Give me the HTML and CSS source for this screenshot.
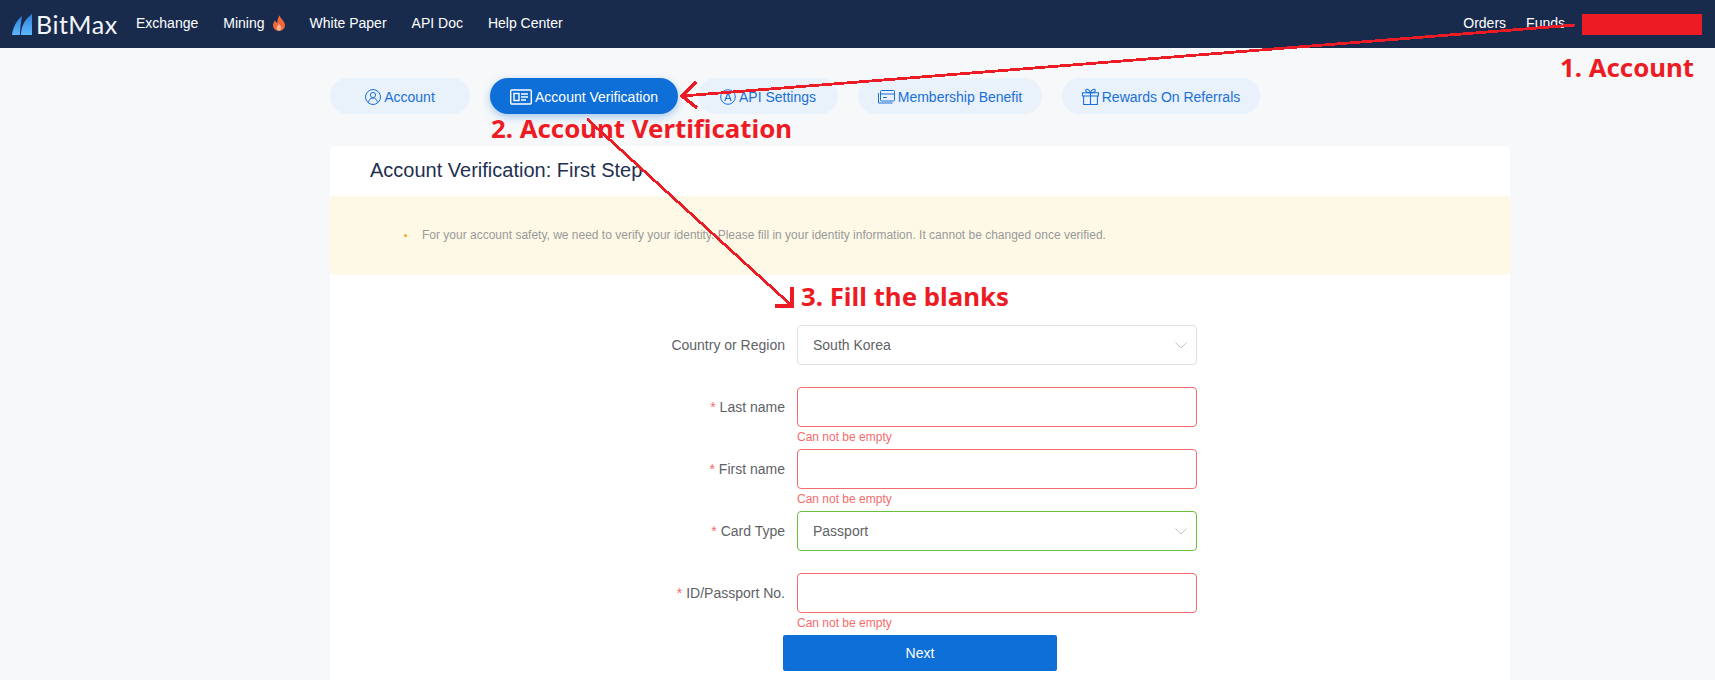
FILE: index.html
```html
<!DOCTYPE html>
<html lang="en">
<head>
<meta charset="utf-8">
<title>BitMax - Account Verification</title>
<link rel="stylesheet" href="styles.css">
</head>
<body>
<header class="topbar">
  <a class="logo">
    <svg class="logo-mark" width="20" height="21" viewBox="0 0 20 21">
      <defs>
        <linearGradient id="sail" x1="0" y1="0" x2="0" y2="1">
          <stop offset="0" stop-color="#2f80d8"/>
          <stop offset="1" stop-color="#5cb8ff"/>
        </linearGradient>
      </defs>
      <path d="M0 21C1 13 5 6 10 2C9 8 8 14 8 21Z" fill="url(#sail)"/>
      <path d="M9 21C9 12 13 5 20 0V21Z" fill="url(#sail)"/>
    </svg>
    <span class="logo-text">BitMax</span>
  </a>
  <nav class="nav">
    <a>Exchange</a>
    <a class="nav-fire">Mining
      <svg width="12" height="16" viewBox="0 0 13 17">
        <path d="M7 0C8 4 13 6 13 11C13 14.500 10 17 6.500 17C3 17 0 14.500 0 11C0 8.500 1.500 7 2.500 5.500C3 7 3.500 8 4.500 8.500C5 5.500 5 3 7 0Z" fill="#f0683c"/>
        <path d="M6.500 9C7 11 9 12 9 14C9 15.500 8 17 6.500 17C5 17 4 15.500 4 14C4 12 6 11 6.500 9Z" fill="#fbb58e"/>
      </svg>
    </a>
    <a>White Paper</a>
    <a>API Doc</a>
    <a>Help Center</a>
  </nav>
  <div class="nav-right">
    <a>Orders</a>
    <a class="funds">Funds</a>
    <span class="redacted"></span>
  </div>
</header>

<main class="page">
  <div class="tabs">
    <a class="tab tab-account">
      <svg width="16" height="16" viewBox="0 0 16 16" fill="none" stroke="currentColor"><circle cx="8" cy="8" r="7.500"/><circle cx="8" cy="6" r="2.600"/><path d="M3.500 13.500C4 10.500 5.500 9 8 9C10.500 9 12 10.500 12.500 13.500"/></svg>
      Account
    </a>
    <a class="tab tab-active tab-verify">
      <svg class="id-icon" width="22" height="16" viewBox="0 0 22 16" fill="none" stroke="currentColor" stroke-width="1.400"><rect x="0.700" y="1" width="20.600" height="14" rx="1"/><rect x="4" y="4.500" width="5" height="7"/><path d="M11 5H18M11 8H18M11 11H16"/></svg>
      Account Verification
    </a>
    <a class="tab tab-api">
      <svg width="16" height="16" viewBox="0 0 16 16" fill="none" stroke="currentColor"><circle cx="8" cy="8" r="7.300"/><path d="M4.800 12L8 3.800L11.200 12M5.900 9.500H10.100" stroke-width="1.200"/></svg>
      API Settings
    </a>
    <a class="tab tab-member">
      <svg width="17" height="14" viewBox="0 0 17 14" fill="none" stroke="currentColor"><rect x="2.500" y="0.500" width="14" height="10.500" rx="1"/><path d="M0.500 3V13H14.500M2.500 4H16.500M5 7.500H9"/></svg>
      Membership Benefit
    </a>
    <a class="tab tab-reward">
      <svg width="17" height="17" viewBox="0 0 16 16" fill="none" stroke="currentColor"><rect x="0.500" y="4.500" width="15" height="3"/><path d="M1.500 7.500V15.500H14.500V7.500M8 4.500V15.500M8 4.500C6 4.500 3.500 4 3.500 2.300C3.500 0.500 6.500 0.500 8 4.500C9.500 0.500 12.500 0.500 12.500 2.300C12.500 4 10 4.500 8 4.500Z"/></svg>
      Rewards On Referrals
    </a>
  </div>

  <section class="card">
    <h1 class="card-title">Account Verification: First Step</h1>
    <ul class="notice">
      <li>For your account safety, we need to verify your identity. Please fill in your identity information. It cannot be changed once verified.</li>
    </ul>
    <form class="form">
      <div class="row">
        <label class="label">Country or Region</label>
        <div class="field">
          <div class="control select">South Korea
            <svg class="chevron" width="12" height="7" viewBox="0 0 12 7" fill="none" stroke="#c0c4cc"><path d="M0.500 0.500L6 6L11.500 0.500"/></svg>
          </div>
        </div>
      </div>
      <div class="row">
        <label class="label"><span class="req">*</span> Last name</label>
        <div class="field"><div class="control invalid"></div><p class="error">Can not be empty</p></div>
      </div>
      <div class="row">
        <label class="label"><span class="req">*</span> First name</label>
        <div class="field"><div class="control invalid"></div><p class="error">Can not be empty</p></div>
      </div>
      <div class="row">
        <label class="label"><span class="req">*</span> Card Type</label>
        <div class="field">
          <div class="control select valid">Passport
            <svg class="chevron" width="12" height="7" viewBox="0 0 12 7" fill="none" stroke="#c0c4cc"><path d="M0.500 0.500L6 6L11.500 0.500"/></svg>
          </div>
        </div>
      </div>
      <div class="row">
        <label class="label"><span class="req">*</span> ID/Passport No.</label>
        <div class="field"><div class="control invalid"></div><p class="error">Can not be empty</p></div>
      </div>
      <button class="next" type="button">Next</button>
    </form>
  </section>
</main>

<svg class="marks" width="1715" height="680" viewBox="0 0 1715 680" fill="none" stroke="#ed1c24" shape-rendering="crispEdges">
  <path d="M1575 25L682 96" stroke-width="2.800"/>
  <path d="M696 82L682 96L697 108" stroke-width="3.500"/>
  <path d="M587 119L792 306" stroke-width="2.800"/>
  <path d="M792 287V306H775" stroke-width="3.500"/>
</svg>
<div class="note note-1">1. Account</div>
<div class="note note-2">2. Account Vertification</div>
<div class="note note-3">3. Fill the blanks</div>
</body>
</html>
```

FILE: styles.css
```css
* { box-sizing: border-box; }
html, body { margin: 0; height: 680px; overflow: hidden; }
body {
  background: #f7f8fa;
  font-family: "Liberation Sans", Arial, sans-serif;
  font-size: 14px;
  color: #606266;
  position: relative;
}
.topbar {
  display: flex;
  align-items: center;
  height: 48px;
  padding: 0 13px 2px 12px;
  background: #182b4d;
  color: #fff;
}
.logo { display: flex; align-items: center; gap: 4px; width: 124px; margin-top: 2px; }
.logo-text { font-family: Lato, "Open Sans", sans-serif; font-size: 25px; color: #f2f5f9; letter-spacing: 0.5px; }
.nav { display: flex; align-items: center; gap: 25px; }
.nav-fire { display: flex; align-items: center; gap: 8px; }
.nav-right { display: flex; align-items: center; margin-left: auto; }
.funds { margin-left: 20px; }
.redacted { width: 120px; height: 21px; background: #ed1c24; margin-left: 17px; margin-top: 2px; }

.page { padding: 30px 0 0 330px; }
.tabs { display: flex; gap: 20px; margin-bottom: 32px; }
.tab {
  display: flex;
  align-items: center;
  justify-content: center;
  gap: 3px;
  height: 36px;
  padding-top: 1px;
  border-radius: 18px;
  background: #e9f1fa;
  color: #1a70d8;
}
.tab-account { width: 140px; }
.tab-verify { width: 188px; }
.tab-api { width: 140px; }
.tab-member { width: 184px; }
.tab-reward { width: 198px; }
.tab-active {
  background: #0e6fd8;
  color: #fff;
  box-shadow: 0 3px 8px rgba(14, 111, 216, 0.35);
}
.card { width: 1180px; height: 560px; background: #fff; border-radius: 4px; }
.card-title {
  margin: 0;
  height: 50px;
  padding-left: 40px;
  font-size: 20px;
  font-weight: 400;
  line-height: 48px;
  color: #22304f;
}
.notice {
  margin: 0;
  height: 79px;
  padding: 0 0 0 74px;
  background: #fef9e7;
  font-size: 12px;
  line-height: 78px;
  color: #999;
  border-radius: 4px;
  list-style: none;
}
.notice li { display: flex; align-items: center; }
.notice li::before {
  content: "";
  width: 3px;
  height: 3px;
  margin-right: 15px;
  border-radius: 50%;
  background: #f5a623;
}
.form { padding-top: 50px; }
.row {
  display: grid;
  grid-template-columns: 455px 400px;
  column-gap: 12px;
  height: 62px;
}
.label { text-align: right; line-height: 40px; }
.req { color: #f56c6c; }
.control {
  position: relative;
  height: 40px;
  padding: 0 15px;
  border: 1px solid #dcdfe6;
  border-radius: 4px;
  background: #fff;
  line-height: 38px;
}
.invalid { border-color: #f56c6c; }
.valid { border-color: #67c23a; }
.chevron { position: absolute; right: 9px; top: 16px; }
.error { margin: 0; font-size: 12px; line-height: 20px; color: #f56c6c; }
.next {
  display: block;
  width: 274px;
  height: 36px;
  margin-left: 453px;
  border: 0;
  border-radius: 2px;
  background: #0e6fd8;
  color: #fff;
  font: 14px "Liberation Sans", Arial, sans-serif;
}

.marks { position: absolute; left: 0; top: 0; pointer-events: none; }
.note {
  position: absolute;
  font-family: "Noto Sans", sans-serif;
  font-weight: 700;
  font-size: 25.800px;
  line-height: 30px;
  color: #ed1c24;
  white-space: nowrap;
}
.note-1 { left: 1560px; top: 52px; }
.note-2 { left: 491px; top: 113px; }
.note-3 { left: 801px; top: 281px; }
```
